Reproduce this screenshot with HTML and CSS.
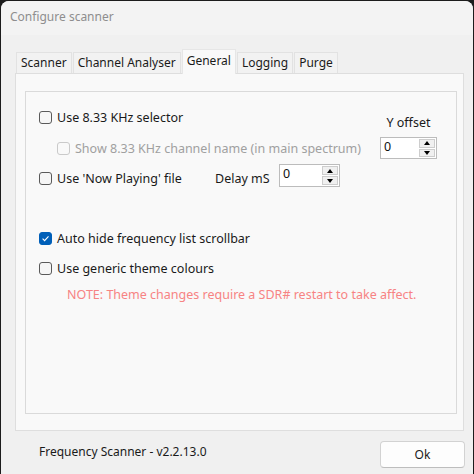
FILE: index.html
```html
<!DOCTYPE html>
<html>
<head>
<meta charset="utf-8">
<link rel="stylesheet" href="styles.css">
</head>
<body>
<div class="window">
  <div class="titlebar">Configure scanner</div>
  <div class="tabs-area">
    <div class="tabstrip">
      <div class="tab">Scanner</div>
      <div class="tab">Channel Analyser</div>
      <div class="tab active">General</div>
      <div class="tab">Logging</div>
      <div class="tab">Purge</div>
    </div>
    <div class="panel">
      <div class="group">
        <div class="row row1">
          <label class="check"><span class="box"></span><span class="lbl">Use 8.33 KHz selector</span></label>
          <span class="yoffset">Y offset</span>
        </div>
        <div class="row row2">
          <label class="check disabled"><span class="box"></span><span class="lbl">Show 8.33 KHz channel name (in main spectrum)</span></label>
          <div class="spin yspin">
            <span class="val">0</span>
            <span class="btns"><span class="up"><span class="tri-up"></span></span><span class="down"><span class="tri-down"></span></span></span>
          </div>
        </div>
        <div class="row row3">
          <label class="check np"><span class="box"></span><span class="lbl">Use 'Now Playing' file</span></label>
          <span class="delay">Delay mS</span>
          <div class="spin dspin">
            <span class="val">0</span>
            <span class="btns"><span class="up"><span class="tri-up"></span></span><span class="down"><span class="tri-down"></span></span></span>
          </div>
        </div>
        <div class="row row4">
          <label class="check checked"><span class="box"><svg width="13" height="13" viewBox="0 0 13 13"><path d="M3.6 6.7 L5.6 8.6 L9.5 4.4" fill="none" stroke="#fff" stroke-width="1.1"/></svg></span><span class="lbl">Auto hide frequency list scrollbar</span></label>
        </div>
        <div class="row row5">
          <label class="check"><span class="box"></span><span class="lbl">Use generic theme colours</span></label>
        </div>
        <div class="row note">NOTE: Theme changes require a SDR# restart to take affect.</div>
      </div>
    </div>
  </div>
  <div class="footer">
    <span class="version">Frequency Scanner - v2.2.13.0</span>
    <button class="ok">Ok</button>
  </div>
</div>
</body>
</html>
```

FILE: styles.css
```css
html, body {
  margin: 0;
  padding: 0;
  background: #1c1c1c;
}
body {
  font-family: "Noto Sans", "Open Sans", sans-serif;
  font-size: 12px;
  color: #1a1a1a;
  width: 474px;
  height: 474px;
  overflow: hidden;
}
.window {
  margin: 1px 0 0 1px;
  width: 472px;
  height: 480px;
  background: #f0f0f0;
  border-radius: 8px;
  overflow: hidden;
  box-sizing: border-box;
}
.titlebar {
  height: 34px;
  line-height: 32px;
  padding-left: 9px;
  color: #8e8e8e;
  background: #f3f3f3;
}
.tabs-area {
  padding: 14px 9px 0 14px;
}
.tabstrip {
  display: flex;
  align-items: flex-end;
  height: 24px;
  padding-left: 1px;
}
.tab {
  height: 21px;
  box-sizing: border-box;
  border: 1px solid #e2e2e2;
  border-bottom: none;
  background: #f2f2f2;
  padding: 0 4px;
  line-height: 20px;
}
.tab + .tab {
  margin-left: 1px;
}
.tab.active {
  height: 25px;
  margin-bottom: -1px;
  background: #f9f9f9;
  position: relative;
  z-index: 1;
  line-height: 22px;
  border-color: #e6e6e6;
}
.panel {
  height: 358px;
  box-sizing: border-box;
  border: 1px solid #dedede;
  background: #f9f9f9;
  padding: 17px 6px 0 9px;
}
.group {
  height: 323px;
  box-sizing: border-box;
  border: 1px solid #dadada;
  padding: 12px 19px 0 13px;
  font-size: 12.5px;
}
.row {
  display: flex;
  align-items: center;
}
.check {
  display: flex;
  align-items: center;
  gap: 5px;
  white-space: nowrap;
}
.box {
  width: 13px;
  height: 13px;
  box-sizing: border-box;
  border: 1px solid #5a5a5a;
  border-radius: 3px;
  background: #f6f6f6;
  flex: none;
  display: flex;
}
.check.checked .box {
  background: #005fb8;
  border-color: #005fb8;
}
.check.checked .box svg {
  margin: -1px;
}
.check.disabled {
  color: #a0a0a0;
}
.check.disabled .box {
  border-color: #cacaca;
  background: #f9f9f9;
}
.row1 {
  height: 26px;
  justify-content: space-between;
  align-items: flex-start;
}
.row1 .check {
  height: 26px;
}
.yoffset {
  width: 57px;
  text-align: center;
  margin-top: 10px;
}
.row2 {
  height: 22px;
  margin-top: 7px;
  padding-left: 18px;
  justify-content: space-between;
}
.row3 {
  height: 23px;
  margin-top: 5px;
}
.np {
  width: 176px;
  margin-top: 6px;
}
.delay {
  width: 64px;
  margin-top: 6px;
}
.spin {
  display: flex;
  height: 22px;
  box-sizing: border-box;
  border: 1px solid #bcbcbc;
  background: #fff;
}
.yspin {
  width: 57px;
}
.dspin {
  width: 61px;
  height: 23px;
}
.val {
  flex: 1;
  padding-left: 3px;
  line-height: 18px;
  color: #111;
}
.btns {
  width: 16px;
  margin: 1px;
  display: flex;
  flex-direction: column;
  gap: 1px;
}
.up, .down {
  flex: 1;
  border: 1px solid #cdcdcd;
  background: #f0f0f0;
  display: flex;
  align-items: center;
  justify-content: center;
}
.tri-up {
  width: 0;
  height: 0;
  border-left: 3.5px solid transparent;
  border-right: 3.5px solid transparent;
  border-bottom: 4px solid #000;
}
.tri-down {
  width: 0;
  height: 0;
  border-left: 3.5px solid transparent;
  border-right: 3.5px solid transparent;
  border-top: 4px solid #000;
}
.row4 {
  height: 26px;
  margin-top: 38px;
}
.row5 {
  height: 26px;
  margin-top: 4px;
}
.note {
  height: 26px;
  padding-left: 28px;
  color: #f78383;
}
.footer {
  display: flex;
  justify-content: space-between;
  align-items: flex-start;
  margin-top: 10px;
  padding: 0 8px 0 38px;
}
.version {
  margin-top: 3px;
  line-height: 16px;
}
.ok {
  width: 85px;
  height: 27px;
  box-sizing: border-box;
  background: #fdfdfd;
  border: 1px solid #d2d2d2;
  border-bottom-color: #bdbdbd;
  border-radius: 4px;
  font-family: inherit;
  font-size: 12px;
  color: #1a1a1a;
  padding: 0;
}
```
